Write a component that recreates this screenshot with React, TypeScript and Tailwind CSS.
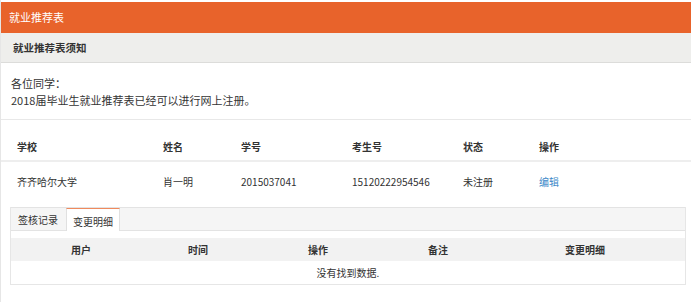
import React from 'react'

const headCols = [
  { label: '学校', w: 'w-[146px]' },
  { label: '姓名', w: 'w-[78px]' },
  { label: '学号', w: 'w-[111px]' },
  { label: '考生号', w: 'w-[111px]' },
  { label: '状态', w: 'w-[76px]' },
  { label: '操作', w: 'w-[100px]' },
]

const rowCells = ['齐齐哈尔大学', '肖一明', '2015037041', '15120222954546', '未注册']

const logCols = [
  { label: '用户', w: 'w-[140px]' },
  { label: '时间', w: 'w-[94px]' },
  { label: '操作', w: 'w-[146px]' },
  { label: '备注', w: 'w-[94px]' },
  { label: '变更明细', w: 'w-[200px]' },
]

const App = () => {
  return (
    <div className="w-[691px] h-[302px] bg-white text-[10px] text-[#333] border-l border-[#e6e6e6] font-['Noto_Sans_CJK_SC','Noto_Sans',sans-serif] overflow-hidden">
      {/* Title bar */}
      <div className="mt-[2px] h-[31px] bg-[#e8632b] text-white text-[11px] flex items-center px-[8px]">
        就业推荐表
      </div>

      {/* Notice header */}
      <div className="h-[30px] bg-[#eeeeec] border-b border-[#dcdcda] flex items-center px-[12px] text-[10.5px] font-bold">
        就业推荐表须知
      </div>

      {/* Notice body */}
      <div className="px-[10px] pt-[12px] h-[57px] border-b border-[#e8e8e8] text-[11px] leading-[17px]">
        <p>各位同学：</p>
        <p>2018届毕业生就业推荐表已经可以进行网上注册。</p>
      </div>

      {/* Table header */}
      <div className="flex h-[42px] pt-[18px] pl-[16px] border-b-2 border-[#eeeeee] font-bold leading-[17px]">
        {headCols.map((c) => (
          <div key={c.label} className={c.w}>
            {c.label}
          </div>
        ))}
      </div>

      {/* Data row */}
      <div className="flex h-[45px] pt-[11px] pl-[16px] leading-[17px]">
        {rowCells.map((c, i) => (
          <div key={i} className={headCols[i].w}>
            {c}
          </div>
        ))}
        <div className={headCols[5].w}>
          <a className="text-[#3a87c8] cursor-pointer">编辑</a>
        </div>
      </div>

      {/* Tabs box */}
      <div className="ml-[9px] w-[676px] border-x border-b border-[#e6e6e6]">
        <div className="flex h-[24px] bg-[#f5f5f5] border-t border-b border-[#e3e3e3] pl-[7px]">
          <div className="w-[48px] whitespace-nowrap pt-[3px] leading-[17px]">签核记录</div>
          <div className="-mb-px w-[54px] bg-white border-t border-t-[#f08a5d] border-x border-[#e0e0e0] pt-[4px] text-center whitespace-nowrap leading-[17px]">
            变更明细
          </div>
        </div>
        <div className="h-[7px]" />
        <div className="flex h-[23px] items-center bg-[#f2f2f2] font-bold">
          {logCols.map((c) => (
            <div key={c.label} className={`${c.w} text-center`}>
              {c.label}
            </div>
          ))}
        </div>
        <div className="h-[23px] flex items-center justify-center">没有找到数据.</div>
      </div>
    </div>
  )
}

export default App
